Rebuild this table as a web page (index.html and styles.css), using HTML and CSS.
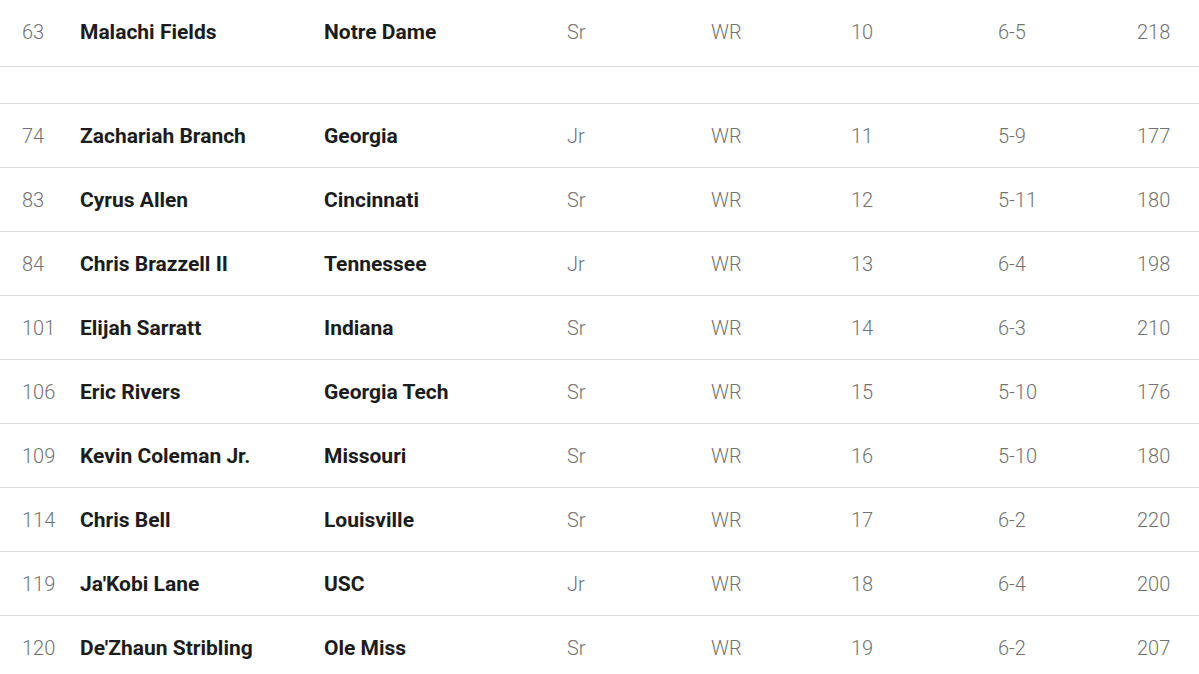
FILE: index.html
```html
<!DOCTYPE html>
<html lang="en">
<head>
    <meta charset="UTF-8">
    <meta name="viewport" content="width=device-width, initial-scale=1.0">
    <title>Wide Receivers</title>
    <link rel="stylesheet" href="styles.css">
</head>
<body>
    <table class="roster">
        <colgroup>
            <col class="c-rank"><col class="c-name"><col class="c-school"><col class="c-class">
            <col class="c-pos"><col class="c-num"><col class="c-ht"><col class="c-wt">
        </colgroup>
        <tbody>
            <tr class="first"><td>63</td><td class="strong">Malachi Fields</td><td class="strong">Notre Dame</td><td>Sr</td><td>WR</td><td>10</td><td>6-5</td><td>218</td></tr>
            <tr class="spacer"><td colspan="8"></td></tr>
            <tr><td>74</td><td class="strong">Zachariah Branch</td><td class="strong">Georgia</td><td>Jr</td><td>WR</td><td>11</td><td>5-9</td><td>177</td></tr>
            <tr><td>83</td><td class="strong">Cyrus Allen</td><td class="strong">Cincinnati</td><td>Sr</td><td>WR</td><td>12</td><td>5-11</td><td>180</td></tr>
            <tr><td>84</td><td class="strong">Chris Brazzell II</td><td class="strong">Tennessee</td><td>Jr</td><td>WR</td><td>13</td><td>6-4</td><td>198</td></tr>
            <tr><td>101</td><td class="strong">Elijah Sarratt</td><td class="strong">Indiana</td><td>Sr</td><td>WR</td><td>14</td><td>6-3</td><td>210</td></tr>
            <tr><td>106</td><td class="strong">Eric Rivers</td><td class="strong">Georgia Tech</td><td>Sr</td><td>WR</td><td>15</td><td>5-10</td><td>176</td></tr>
            <tr><td>109</td><td class="strong">Kevin Coleman Jr.</td><td class="strong">Missouri</td><td>Sr</td><td>WR</td><td>16</td><td>5-10</td><td>180</td></tr>
            <tr><td>114</td><td class="strong">Chris Bell</td><td class="strong">Louisville</td><td>Sr</td><td>WR</td><td>17</td><td>6-2</td><td>220</td></tr>
            <tr><td>119</td><td class="strong">Ja'Kobi Lane</td><td class="strong">USC</td><td>Jr</td><td>WR</td><td>18</td><td>6-4</td><td>200</td></tr>
            <tr class="last"><td>120</td><td class="strong">De'Zhaun Stribling</td><td class="strong">Ole Miss</td><td>Sr</td><td>WR</td><td>19</td><td>6-2</td><td>207</td></tr>
        </tbody>
    </table>
</body>
</html>
```

FILE: styles.css
```css
body {
    margin: 0;
    background-color: #fff;
    font-family: Roboto, "Noto Sans", sans-serif;
}
.roster {
    width: 1199px;
    border-collapse: collapse;
    table-layout: fixed;
}
.c-rank { width: 80px; }
.c-name { width: 244px; }
.c-school { width: 243px; }
.c-class { width: 144px; }
.c-pos { width: 140px; }
.c-num { width: 147px; }
.c-ht { width: 139px; }
.c-wt { width: 62px; }
.roster td {
    height: 63px;
    padding: 0;
    font-size: 20px;
    font-weight: 300;
    color: #727272;
    border-bottom: 1px solid #dedede;
    white-space: nowrap;
}
.roster td:first-child {
    padding-left: 22px;
}
.roster td.strong {
    font-size: 21px;
    font-weight: 700;
    color: #1c1c1c;
}
.roster .first td {
    height: 64px;
    padding-bottom: 2px;
}
.roster .spacer td {
    height: 36px;
}
.roster .last td {
    border-bottom: none;
}
```
